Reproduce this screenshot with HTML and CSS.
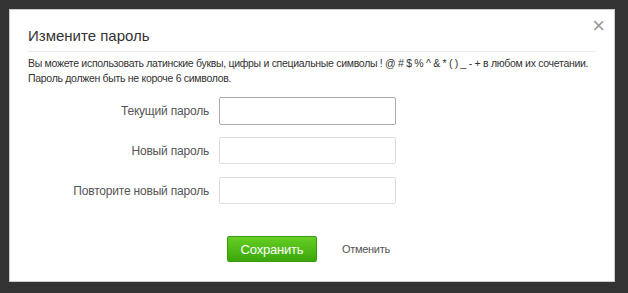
FILE: index.html
```html
<!DOCTYPE html>
<html lang="ru">
<head>
    <meta charset="UTF-8">
    <title>Измените пароль</title>
    <link rel="stylesheet" href="styles.css">
</head>
<body>
    <div class="dialog">
        <span class="close">&times;</span>
        <h1 class="title">Измените пароль</h1>
        <p class="hint">Вы можете использовать латинские буквы, цифры и специальные символы ! @ # $ % ^ &amp; * ( ) _ - + в любом их сочетании.<br>Пароль должен быть не короче 6 символов.</p>
        <div class="form">
            <div class="row">
                <label for="cur">Текущий пароль</label>
                <input type="password" id="cur" class="field focused">
            </div>
            <div class="row">
                <label for="new1">Новый пароль</label>
                <input type="password" id="new1" class="field">
            </div>
            <div class="row">
                <label for="new2">Повторите новый пароль</label>
                <input type="password" id="new2" class="field">
            </div>
        </div>
        <div class="actions">
            <button class="save">Сохранить</button>
            <a href="#" class="cancel">Отменить</a>
        </div>
    </div>
</body>
</html>
```

FILE: styles.css
```css
html, body {
    margin: 0;
    height: 100%;
}
body {
    background-color: #333;
    font-family: "Liberation Sans", Arial, sans-serif;
    color: #333;
    padding: 9px 13px 11px 9px;
    box-sizing: border-box;
}
.dialog {
    position: relative;
    background-color: #fff;
    border: 1px solid #ccc;
    height: 273px;
    box-sizing: border-box;
    padding: 0 17px 0 18px;
}
.close {
    position: absolute;
    top: 5px;
    right: 9px;
    font-size: 22px;
    color: #999;
    line-height: 22px;
}
.title {
    margin: 0;
    padding: 17px 0 7px 0;
    font-size: 15px;
    font-weight: normal;
    color: #333;
    line-height: 17px;
    border-bottom: 1px solid #eee;
}
.hint {
    margin: 4px 0 0 0;
    font-size: 10.5px;
    letter-spacing: -0.3px;
    line-height: 15px;
    color: #333;
}
.form {
    margin-top: 11px;
}
.row {
    display: flex;
    align-items: center;
    margin-bottom: 13px;
}
.row:first-child {
    margin-bottom: 12px;
}
.row label {
    width: 181px;
    text-align: right;
    font-size: 12px;
    letter-spacing: -0.2px;
    color: #555;
    margin-right: 10px;
}
.field {
    width: 177px;
    height: 27px;
    box-sizing: border-box;
    border: 1px solid #ddd;
    border-radius: 2px;
    margin: 0;
    padding: 0 5px;
}
.field.focused {
    border-color: #aaa;
    height: 28px;
}
.actions {
    display: flex;
    align-items: center;
    margin-top: 32px;
    padding-left: 199px;
}
.save {
    width: 90px;
    height: 26px;
    border: 1px solid #3a9d10;
    border-radius: 2px;
    background: linear-gradient(#66cf22, #3ba70c);
    color: #fff;
    font-family: "Liberation Sans", Arial, sans-serif;
    font-size: 13px;
    letter-spacing: -0.2px;
    padding: 0;
}
.cancel {
    margin-left: 25px;
    font-size: 11px;
    letter-spacing: -0.3px;
    color: #555;
    text-decoration: none;
}
```
